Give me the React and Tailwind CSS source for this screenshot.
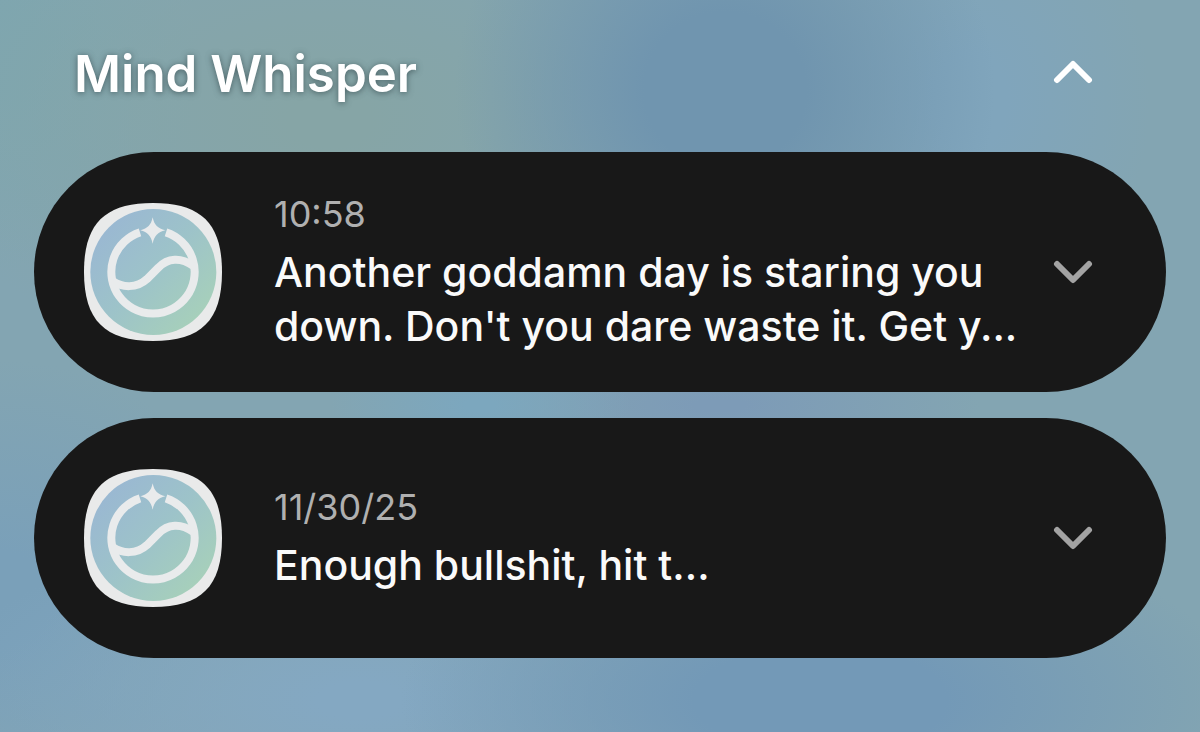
import React, { useState } from 'react';

const notifications = [
    {
        id: 1,
        time: '10:58',
        lines: ['Another goddamn day is staring you', "down. Don't you dare waste it. Get y..."],
    },
    {
        id: 2,
        time: '11/30/25',
        lines: ['Enough bullshit, hit t...'],
    },
];

const AppLogo = ({ id }) => (
    <svg viewBox="43 38 414 414" className="size-[138px] shrink-0" aria-hidden="true">
        <defs>
            <linearGradient id={`logo-${id}`} x1="0.12" y1="0.15" x2="0.85" y2="0.85">
                <stop offset="0" stopColor="#9ab8d2" />
                <stop offset="0.5" stopColor="#9dc3c9" />
                <stop offset="1" stopColor="#a6cfbb" />
            </linearGradient>
        </defs>
        <path
            d="M250 38 C395 38 457 100 457 245 C457 390 395 452 250 452 C105 452 43 390 43 245 C43 100 105 38 250 38Z"
            fill="#e9eaea"
        />
        <circle cx="251" cy="245" r="189" fill={`url(#logo-${id})`} />
        <g fill="none" stroke="#e9ebec" strokeWidth="24">
            <path d="M211 126 A125 125 0 1 0 289 126" />
            <path d="M129 272 C158 292 200 295 232 266 L266 232 C294 202 334 200 370 226" />
        </g>
        <path
            d="M249 81 C254 105 264 114 287 120 C264 126 254 136 249 160 C244 136 234 126 212 120 C234 114 244 105 249 81Z"
            fill="#e9ebec"
        />
    </svg>
);

const Chevron = ({ up }) => (
    <svg viewBox="0 0 40 24" className="h-6 w-10" fill="none" stroke="currentColor" strokeWidth="6" strokeLinecap="round" strokeLinejoin="round" aria-hidden="true">
        <path d={up ? 'M4 20 L20 4 L36 20' : 'M4 4 L20 20 L36 4'} />
    </svg>
);

const NotificationCard = ({ item }) => (
    <li className="flex min-h-60 items-center rounded-[120px] bg-[#181818] pr-[73px] pl-[50px]">
        <AppLogo id={item.id} />
        <div className="ml-[52px] min-w-0 flex-1">
            <time className="mb-2 block text-[36px] leading-[46px] text-[#b0b0b0]">{item.time}</time>
            <p className="text-[41px] leading-[54px] font-[450] whitespace-nowrap text-[#fafafa]">
                {item.lines.map((line) => (
                    <span key={line} className="block">{line}</span>
                ))}
            </p>
        </div>
        <button type="button" aria-label="Expand notification" className="text-[#a3a3a3]">
            <Chevron />
        </button>
    </li>
);

export default function App() {
    const [open, setOpen] = useState(true);

    return (
        <main className="min-h-screen bg-[#83a5b2] bg-[radial-gradient(ellipse_270px_260px_at_725px_90px,#7095af_30%,#7095af00_100%),radial-gradient(ellipse_420px_260px_at_330px_120px,#86a5a6_10%,#86a5a600_100%),radial-gradient(ellipse_180px_240px_at_970px_100px,#80a5bc_20%,#80a5bc00_100%),radial-gradient(ellipse_150px_60px_at_480px_405px,#7ca7be_10%,#7ca7be00_100%),radial-gradient(ellipse_260px_60px_at_720px_405px,#7d9bb7_10%,#7d9bb700_100%),radial-gradient(ellipse_420px_180px_at_820px_700px,#7399b7_30%,#7399b700_100%),radial-gradient(ellipse_420px_180px_at_360px_700px,#84a8c2_10%,#84a8c200_100%),radial-gradient(ellipse_260px_240px_at_0px_600px,#7aa0b9_20%,#7aa0b900_100%),radial-gradient(ellipse_200px_220px_at_0px_50px,#7ea6b0_20%,#7ea6b000_100%)] px-[34px] pb-8 font-['Inter',sans-serif]">
            <header className="flex h-[152px] items-center justify-between pr-[73px] pb-2 pl-10 text-white">
                <h1 className="pt-1 text-[51px] leading-[60px] font-semibold [text-shadow:0_1px_6px_rgba(45,65,70,0.7)]">Mind Whisper</h1>
                <button type="button" aria-label="Toggle group" aria-expanded={open} onClick={() => setOpen(!open)}>
                    <Chevron up={open} />
                </button>
            </header>
            {open && (
                <ul className="flex flex-col gap-[26px]">
                    {notifications.map((item) => (
                        <NotificationCard key={item.id} item={item} />
                    ))}
                </ul>
            )}
        </main>
    );
}
